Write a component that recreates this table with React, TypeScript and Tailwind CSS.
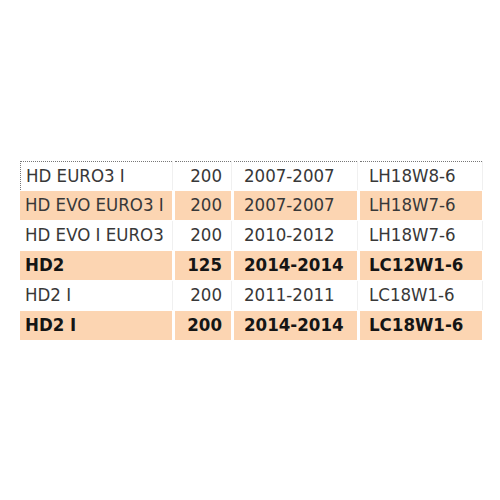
import React from "react";

type Row = { name: string; qty: string; years: string; code: string; hl: boolean; bold: boolean };

const rows: Row[] = [
  { name: "HD EURO3 I", qty: "200", years: "2007-2007", code: "LH18W8-6", hl: false, bold: false },
  { name: "HD EVO EURO3 I", qty: "200", years: "2007-2007", code: "LH18W7-6", hl: true, bold: false },
  { name: "HD EVO I EURO3", qty: "200", years: "2010-2012", code: "LH18W7-6", hl: false, bold: false },
  { name: "HD2", qty: "125", years: "2014-2014", code: "LC12W1-6", hl: true, bold: true },
  { name: "HD2 I", qty: "200", years: "2011-2011", code: "LC18W1-6", hl: false, bold: false },
  { name: "HD2 I", qty: "200", years: "2014-2014", code: "LC18W1-6", hl: true, bold: true },
];

export default function App() {
  return (
    <div
      className="w-[500px] h-[500px] bg-white pt-[161px] pl-[20px]"
      style={{ fontFamily: '"DejaVu Sans Condensed", "DejaVu Sans", sans-serif' }}
    >
      <div className="grid grid-cols-[152px_56px_123px_122px] gap-x-[3px] gap-y-[1px] text-[18.5px] leading-none">
        {rows.map((r, i) => {
          const bg = r.hl ? "bg-[#fcd5b2]" : "bg-white shadow-[1px_0_0_#f0f0f0]";
          const txt = r.bold ? "font-bold text-[#151515]" : "text-[#383838]";
          const top = i === 0 ? "border-t border-dotted border-[#777]" : "";
          return (
            <React.Fragment key={i}>
              <div className={`h-[29px] flex items-center pl-[5px] whitespace-nowrap ${bg} ${txt} ${top} ${i === 0 ? "border-l" : ""}`}>
                {r.name}
              </div>
              <div className={`h-[29px] flex items-center justify-end pr-[9px] ${bg} ${txt} ${top}`}>{r.qty}</div>
              <div className={`h-[29px] flex items-center pl-[10px] ${bg} ${txt} ${top}`}>{r.years}</div>
              <div className={`h-[29px] flex items-center pl-[9px] ${bg} ${txt} ${top}`}>{r.code}</div>
            </React.Fragment>
          );
        })}
      </div>
    </div>
  );
}
